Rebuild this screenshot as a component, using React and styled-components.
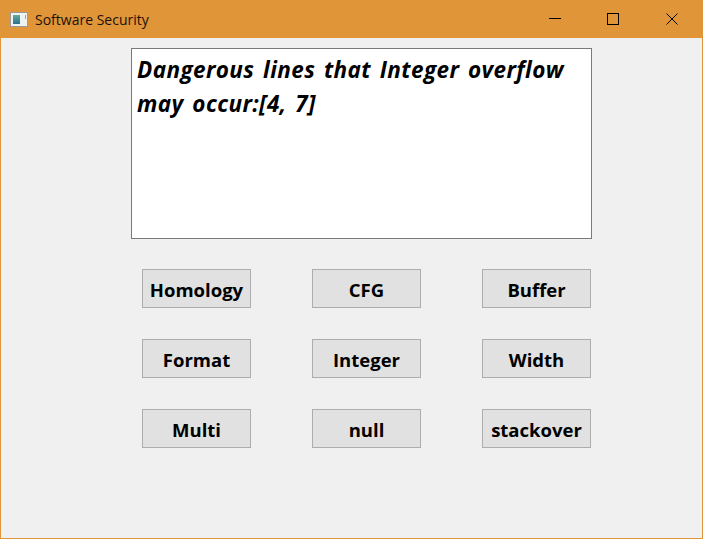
import React from "react";
import styled, { createGlobalStyle } from "styled-components";

const buttonLabels = [
  "Homology",
  "CFG",
  "Buffer",
  "Format",
  "Integer",
  "Width",
  "Multi",
  "null",
  "stackover",
];

const App = () => {
  return (
    <React.Fragment>
      <GlobalStyle />
      <Window>
        <TitleBar>
          <AppIcon width="18" height="15" viewBox="0 0 18 15">
            <defs>
              <linearGradient id="iconFill" x1="0" y1="0" x2="0" y2="1">
                <stop offset="0" stopColor="#5fae9a" />
                <stop offset="1" stopColor="#2f6f8f" />
              </linearGradient>
            </defs>
            <rect x="0.5" y="0.5" width="17" height="14" fill="#eef2f0" stroke="#9a9a9a" />
            <rect x="3" y="3" width="7" height="9" fill="url(#iconFill)" />
            <rect x="15" y="3" width="1" height="4" fill="#6fb3ad" />
          </AppIcon>
          <Title>Software Security</Title>
          <WindowControls>
            <ControlButton>
              <svg width="12" height="12" viewBox="0 0 12 12">
                <path d="M0 5.5H12" stroke="#000" strokeWidth="1" />
              </svg>
            </ControlButton>
            <ControlButton>
              <svg width="12" height="12" viewBox="0 0 12 12">
                <rect x="0.5" y="0.5" width="11" height="11" fill="none" stroke="#000" />
              </svg>
            </ControlButton>
            <ControlButton $wide>
              <svg width="12" height="12" viewBox="0 0 12 12">
                <path d="M0.5 0.5L11.5 11.5M11.5 0.5L0.5 11.5" stroke="#000" strokeWidth="1" />
              </svg>
            </ControlButton>
          </WindowControls>
        </TitleBar>
        <Content>
          <OutputBox>Dangerous lines that Integer overflow may occur:[4, 7]</OutputBox>
          <ButtonGrid>
            {buttonLabels.map((label) => (
              <ActionButton key={label}>{label}</ActionButton>
            ))}
          </ButtonGrid>
        </Content>
      </Window>
    </React.Fragment>
  );
};

export default App;

const GlobalStyle = createGlobalStyle`
  html, body {
    margin: 0;
    padding: 0;
    background: #f0f0f0;
  }
`;

const Window = styled.div`
  box-sizing: border-box;
  width: 703px;
  height: 539px;
  border: 1px solid #e09539;
  border-top: none;
  background: #f0f0f0;
  display: flex;
  flex-direction: column;
`;

const TitleBar = styled.div`
  height: 38px;
  margin: 0 -1px;
  background: #e09539;
  display: flex;
  align-items: center;
  padding: 0 1px 0 10px;
  flex-shrink: 0;
`;

const AppIcon = styled.svg`
  margin-right: 7px;
`;

const Title = styled.div`
  font-family: "Open Sans", "Noto Sans", sans-serif;
  font-size: 14px;
  color: #1c1208;
`;

const WindowControls = styled.div`
  margin-left: auto;
  display: flex;
`;

const ControlButton = styled.div`
  width: ${(props) => (props.$wide ? "60px" : "58px")};
  height: 38px;
  display: flex;
  align-items: center;
  justify-content: center;
`;

const Content = styled.div`
  padding: 10px 0 0 130px;
`;

const OutputBox = styled.div`
  box-sizing: border-box;
  width: 461px;
  height: 191px;
  border: 1px solid #7a7a7a;
  background: #fff;
  padding: 4px 5px;
  font-family: "Open Sans", "Noto Sans", sans-serif;
  font-size: 22.5px;
  line-height: 34px;
  font-weight: 700;
  font-style: italic;
  color: #000;
  letter-spacing: 0.4px;
  word-spacing: 2.5px;
`;

const ButtonGrid = styled.div`
  display: grid;
  grid-template-columns: repeat(3, 109px);
  column-gap: 61px;
  row-gap: 31px;
  margin: 30px 0 0 11px;
`;

const ActionButton = styled.button`
  box-sizing: border-box;
  width: 109px;
  height: 39px;
  padding: 1px 0 0;
  border: 1px solid #adadad;
  background: #e1e1e1;
  font-family: "Open Sans", "Noto Sans", sans-serif;
  font-size: 18.5px;
  font-weight: 700;
  color: #000;
`;
